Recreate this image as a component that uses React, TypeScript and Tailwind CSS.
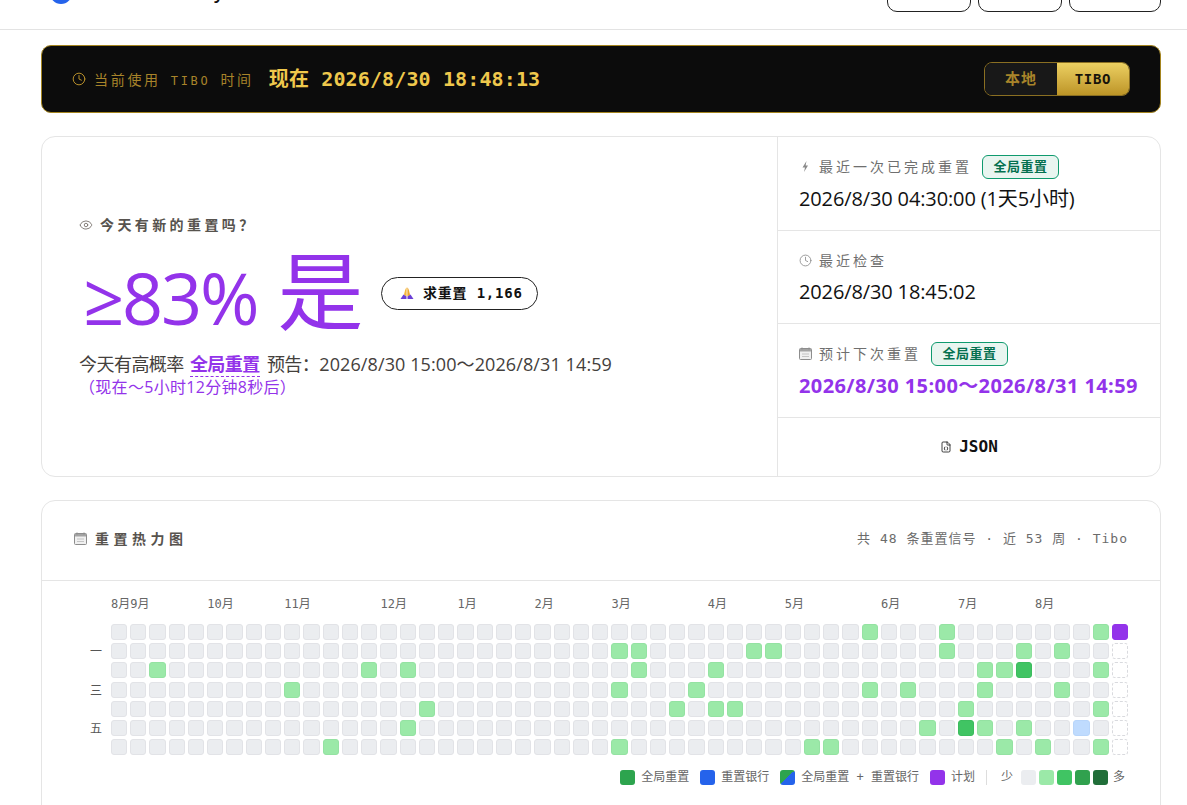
import React from "react";
import { Clock, Eye, FileJson } from "lucide-react";

type Level = "none" | "low" | "high" | "bank" | "plan" | "future";

const SANS = "font-['Open_Sans','Noto_Sans_CJK_SC',sans-serif]";
const MONO = "font-['DejaVu_Sans_Mono','Noto_Sans_CJK_SC',monospace]";

const months: [string, number][] = [
  ["8月", 0],
  ["9月", 1],
  ["10月", 5],
  ["11月", 9],
  ["12月", 14],
  ["1月", 18],
  ["2月", 22],
  ["3月", 26],
  ["4月", 31],
  ["5月", 35],
  ["6月", 40],
  ["7月", 44],
  ["8月", 48],
];

// rows are Sunday-first, each list holds the week index of a signal
const lowCells: number[][] = [
  [39, 43, 51],
  [26, 27, 33, 34, 43, 47, 49],
  [2, 13, 15, 27, 31, 45, 46, 51],
  [9, 26, 30, 39, 41, 45, 49],
  [16, 29, 31, 32, 44, 51],
  [15, 42, 45, 47],
  [11, 26, 36, 37, 46, 48, 51],
];

const levelFor = (row: number, col: number): Level => {
  if (col === 52) return row === 0 ? "plan" : "future";
  if ((row === 2 && col === 47) || (row === 5 && col === 44)) return "high";
  if (row === 5 && col === 50) return "bank";
  return lowCells[row].includes(col) ? "low" : "none";
};

const cellClass: Record<Level, string> = {
  none: "bg-[#ebedf0] border border-[#e2e3e7]",
  low: "bg-[#9be9a8] border border-[#94e2a2]",
  high: "bg-[#40c463] border border-[#3cbc5e]",
  bank: "bg-[#bfdbfe] border border-[#b8d5fa]",
  plan: "bg-[#9333ea] border border-[#9333ea]",
  future: "bg-white border border-dashed border-[#d9dade]",
};

const CalendarIcon = () => (
  <svg width="13" height="13" viewBox="0 0 13 13" className="shrink-0">
    <rect x="0.5" y="1.5" width="12" height="11" rx="1" fill="#f0f0f0" stroke="#8d8d8d" />
    <rect x="1" y="2" width="11" height="2.5" fill="#a3a3a3" />
    <path d="M3 0.5v2M10 0.5v2" stroke="#8d8d8d" />
    <path d="M3 7h7M3 9.5h7" stroke="#c4c4c4" />
  </svg>
);

const Badge = () => (
  <span className={`${SANS} inline-flex h-6 w-[77px] items-center justify-center rounded-md border border-[#0f9a6e] bg-[#e9f5f0] text-[13px] font-bold tracking-[0.04em] text-[#04704f]`}>
    全局重置
  </span>
);

const InfoRow: React.FC<{
  icon: React.ReactNode;
  label: string;
  badge?: boolean;
  className: string;
  children: React.ReactNode;
}> = ({ icon, label, badge, className, children }) => (
  <div className={`flex flex-col justify-center border-b border-[#e5e5e5] pl-[21px] ${className}`}>
    <div className="flex h-6 items-center">
      <span className="flex w-[20px] shrink-0">{icon}</span>
      <span className="text-[14px] tracking-[3px] text-[#6f6f6f]">{label}</span>
      {badge && (
        <span className="ml-[10px] flex pt-[1px]">
          <Badge />
        </span>
      )}
    </div>
    <div className="mt-[6px] whitespace-nowrap text-[20px] leading-[28px] tracking-[-0.13px]">{children}</div>
  </div>
);

const Legend: React.FC<{ swatch: string; children: React.ReactNode }> = ({ swatch, children }) => (
  <span className="flex items-center gap-[6px]">
    <span className={`h-[15px] w-[15px] rounded-[3px] ${swatch}`} />
    <span className="whitespace-pre">{children}</span>
  </span>
);

export default function App() {
  return (
    <div className={`${SANS} h-[805px] overflow-hidden bg-white text-[#111]`}>
      <header className="h-[30px] overflow-hidden border-b border-[#e3e3e3]">
        <div className="-mt-[28px] flex items-start justify-between pl-[50px] pr-[26px]">
          <div className="flex h-[32px] w-[180px] items-end">
            <span className="block h-[26px] w-[22px] rounded-b-[13px] bg-[#2563eb]" />
            <span className="ml-[142px] text-[18px] leading-[24px] font-semibold">y</span>
          </div>
          <div className="flex gap-[7px]">
            <span className="h-10 w-[84px] rounded-[10px] border border-[#222]" />
            <span className="h-10 w-[84px] rounded-[10px] border border-[#222]" />
            <span className="h-10 w-[92px] rounded-[10px] border border-[#222]" />
          </div>
        </div>
      </header>

      <main className="flex flex-col pl-[41px] pr-[26px] pt-[15px]">
        <section className="flex h-[68px] items-center justify-between rounded-[10px] border border-[#a5851f] bg-[#0c0c0c] pl-[30px] pr-[30px]">
          <div className="flex items-center">
            <Clock size={14} strokeWidth={1.7} className="text-[#b8902a]" />
            <span className="ml-[8px] text-[14px] tracking-[2.7px] text-[#a8842a]">
              当前使用<span className={`${MONO} whitespace-pre text-[12px]`}> TIBO </span>时间
            </span>
            <span className={`${MONO} ml-[15px] text-[20px] font-bold tracking-[0.13px] text-[#efc84c]`}>
              现在 2026/8/30 18:48:13
            </span>
          </div>
          <div className={`${MONO} flex h-[34px] w-[146px] overflow-hidden rounded-lg border border-[#8a6f22] font-bold`}>
            <span className="flex flex-1 items-center justify-center bg-[#181818] text-[15px] tracking-[1px] text-[#a8842a]">本地</span>
            <span className="flex flex-1 items-center justify-center bg-linear-to-b from-[#ecd061] to-[#bd9526] text-[14px] tracking-[0.05em] text-[#17140a]">
              TIBO
            </span>
          </div>
        </section>

        <section className="mt-[23px] flex h-[341px] overflow-hidden rounded-[14px] border border-[#e5e5e5]">
          <div className="flex flex-1 flex-col justify-center pb-[2px] pl-[37px]">
            <div className="flex items-center text-[14px] font-bold tracking-[3.4px] text-[#57534e]">
              <Eye size={14} strokeWidth={1.5} className="text-[#78716c]" />
              <span className="ml-[7px]">今天有新的重置吗？</span>
            </div>
            <div className="mt-[16px] flex h-[92px] items-center">
              <div className="flex w-[283px] items-center whitespace-nowrap text-[#9333ea]">
                <span className="ml-[4px] text-[72px] leading-none tracking-[-0.03em]">≥83%</span>
                <span className="mb-[12px] ml-[20px] text-[86px] leading-none">是</span>
              </div>
              <span className={`${MONO} ml-[19px] flex h-[33px] w-[157px] -translate-y-[4px] items-center rounded-full border border-[#222] pl-[17px] text-[14px] font-bold tracking-[0.8px]`}>
                <svg width="16" height="16" viewBox="0 0 16 16" className="shrink-0">
                  <path d="M7.6 2.5C6.5 3 5.5 7 5 10l2.6 1.5z" fill="#f6b73c" />
                  <path d="M8.4 2.5C9.5 3 10.5 7 11 10l-2.6 1.5z" fill="#eda52c" />
                  <path d="M1.5 14l3-4.5 3 2v2.5z" fill="#6a3fd6" />
                  <path d="M14.5 14l-3-4.5-3 2v2.5z" fill="#6a3fd6" />
                </svg>
                <span className="ml-[8px]">求重置 1,166</span>
              </span>
            </div>
            <p className="mt-[8px] whitespace-nowrap text-[18px] leading-[26px] tracking-[-0.03em] text-[#44403c]">
              今天有高概率{" "}
              <span className="ml-[2px] mr-[3px] border-b border-dashed border-[#9333ea] font-bold text-[#9333ea]">全局重置</span> 预告：
              <span className="tracking-[0.1px]">2026/8/30 15:00～2026/8/31 14:59</span>
            </p>
            <p className="text-[16px] leading-[20px] tracking-[0.3px] text-[#9333ea]">（现在～5小时12分钟8秒后）</p>
          </div>

          <div className="flex w-[383px] shrink-0 flex-col border-l border-[#e5e5e5]">
            <InfoRow
              className="h-[94px]"
              badge
              label="最近一次已完成重置"
              icon={
                <svg width="13" height="13" viewBox="0 0 13 13">
                  <path d="M7.5 1L3.5 7.5H6L5 12l4-6.5H6.6z" fill="#8a8a8a" />
                </svg>
              }
            >
              2026/8/30 04:30:00 (1天5小时)
            </InfoRow>
            <InfoRow
              className="h-[93px]"
              label="最近检查"
              icon={<Clock size={13} strokeWidth={1.6} className="text-[#8f8f8f]" />}
            >
              2026/8/30 18:45:02
            </InfoRow>
            <InfoRow className="h-[94px]" badge label="预计下次重置" icon={<CalendarIcon />}>
              <span className="font-bold tracking-[0.4px] text-[#9333ea]">2026/8/30 15:00～2026/8/31 14:59</span>
            </InfoRow>
            <div className={`${MONO} flex flex-1 items-center justify-center gap-[7px] text-[16px] font-bold`}>
              <FileJson size={12} strokeWidth={1.6} />
              JSON
            </div>
          </div>
        </section>

        <section className="mt-[23px] h-[360px] rounded-[14px] border border-[#e5e5e5]">
          <div className="flex h-[80px] items-center justify-between border-b border-[#e5e5e5] pl-[32px] pr-[32px] pb-[4px]">
            <div className="flex items-center gap-[8px]">
              <CalendarIcon />
              <span className="text-[14px] font-bold tracking-[4.5px] text-[#57534e]">重置热力图</span>
            </div>
            <span className={`${MONO} text-[13px] tracking-[1px] text-[#6b6b6b]`}>
              共 48 条重置信号 · 近 53 周 · Tibo
            </span>
          </div>

          <div className="flex pl-[48px] pr-[32px] pt-[15px]">
            <div className="flex w-[21px] shrink-0 flex-col gap-[3.2px] pt-[29px] text-[12px] text-[#555]">
              {["", "一", "", "三", "", "五", ""].map((d, i) => (
                <span key={i} className="flex h-[16px] items-center">
                  {d}
                </span>
              ))}
            </div>
            <div className="flex min-w-0 flex-1 flex-col">
              <div className={`${MONO} grid h-[17px] grid-cols-[repeat(53,minmax(0,1fr))] gap-x-[3.2px] text-[12px] leading-[17px] text-[#666]`}>
                {months.map(([name, col], i) => (
                  <span key={i} className="whitespace-nowrap" style={{ gridColumnStart: col + 1 }}>
                    {name}
                  </span>
                ))}
              </div>
              <div className="mt-[11px] grid grid-flow-col grid-cols-[repeat(53,minmax(0,1fr))] grid-rows-7 gap-[3.2px]">
                {Array.from({ length: 53 * 7 }, (_, i) => {
                  const col = Math.floor(i / 7);
                  const row = i % 7;
                  return <div key={i} className={`h-[16px] rounded-[3px] ${cellClass[levelFor(row, col)]}`} />;
                })}
              </div>
            </div>
          </div>

          <div className="mt-[12px] flex items-center justify-end gap-[11px] pr-[35px] text-[12px] text-[#666]">
            <Legend swatch="bg-[#2da44e]">全局重置</Legend>
            <Legend swatch="bg-[#2563eb]">重置银行</Legend>
            <Legend swatch="bg-[linear-gradient(135deg,#2da44e_50%,#2563eb_50%)]">
              全局重置<span className={MONO}> + </span>重置银行
            </Legend>
            <Legend swatch="bg-[#9333ea]">计划</Legend>
            <span className="mr-[3px] h-[15px] w-px bg-[#ddd]" />
            <span className="flex items-center gap-[3px]">
              <span className="mr-[5px]">少</span>
              <span className="h-[15px] w-[15px] rounded-[3px] bg-[#ebedf0]" />
              <span className="h-[15px] w-[15px] rounded-[3px] bg-[#9be9a8]" />
              <span className="h-[15px] w-[15px] rounded-[3px] bg-[#40c463]" />
              <span className="h-[15px] w-[15px] rounded-[3px] bg-[#30a14e]" />
              <span className="h-[15px] w-[15px] rounded-[3px] bg-[#216e39]" />
              <span className="ml-[2px]">多</span>
            </span>
          </div>
        </section>
      </main>
    </div>
  );
}
